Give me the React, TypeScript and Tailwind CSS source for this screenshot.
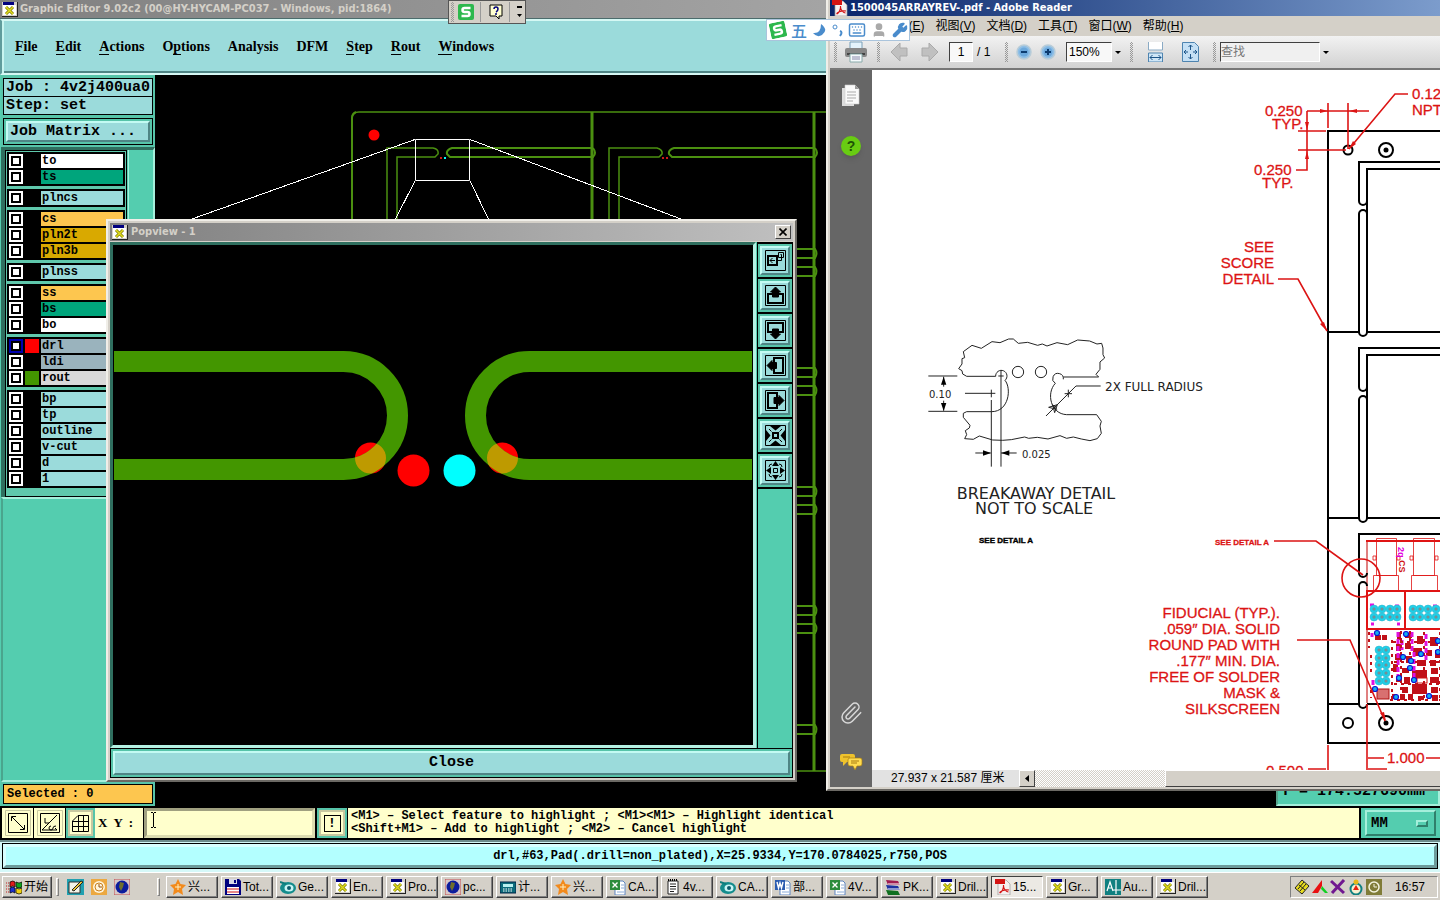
import React from "react";
import { Keyboard, User, Wrench, Paperclip } from "lucide-react";

const mono = "font-['Liberation_Mono',monospace] font-bold";
const ui = "font-['Liberation_Sans','Noto_Sans_CJK_SC',sans-serif]";
const caption = "font-['DejaVu_Sans_Condensed','DejaVu_Sans',sans-serif] font-bold font-stretch-condensed text-[11px]";
const motif =
  "border-2 border-t-[#c3fbf3] border-l-[#c3fbf3] border-b-[#4f8585] border-r-[#4f8585] bg-[#9bdbdb]";
const winRaised =
  "border border-t-white border-l-white border-b-[#404040] border-r-[#404040] bg-[#d4d0c8]";
const winSunken =
  "border border-t-[#404040] border-l-[#404040] border-b-white border-r-white";

/* ---------- shared icons ---------- */

const EditorIcon = () => (
  <svg className="h-[15px] w-4 shrink-0" viewBox="0 0 16 15">
    <rect width="16" height="15" fill="#222" />
    <rect width="15" height="14" fill="#d4d0c8" />
    <rect x="1" y="3" width="13" height="10" fill="#fff" />
    <rect x="1" width="11" height="3" fill="#00007f" />
    <path d="M4 5l7 7M11 5l-7 7" stroke="#807c00" strokeWidth="3" />
    <path d="M4 5l7 7M11 5l-7 7" stroke="#e0dc20" strokeWidth="1.5" />
  </svg>
);

const PdfIcon = () => (
  <svg className="size-4 shrink-0" viewBox="0 0 16 16">
    <path d="M3 1h8l4 4v11H3z" fill="#f5f0f0" stroke="#999" strokeWidth=".7" />
    <path d="M0 0h10v5H0z" fill="#d41414" />
    <path d="M5 14c2-1 4-5 3.500-8M5 14c-1-1 4-4 9-3M8.500 7c0 3 3 6 5 6" fill="none" stroke="#d41414" strokeWidth="1.200" />
  </svg>
);

const SogouIcon = ({ className = "size-4" }: { className?: string }) => (
  <svg className={`shrink-0 ${className}`} viewBox="0 0 16 16">
    <rect width="16" height="16" rx="2" fill="#2db84d" />
    <path d="M12.500 4H6.500a2 2 0 0 0 0 4h3a2 2 0 0 1 0 4H3.500" fill="none" stroke="#fff" strokeWidth="2.500" />
  </svg>
);

/* ---------- graphic editor ---------- */

const menus = [
  { label: "File", key: 0 },
  { label: "Edit", key: 0 },
  { label: "Actions", key: 0 },
  { label: "Options", key: 1 },
  { label: "Analysis", key: -1 },
  { label: "DFM", key: -1 },
  { label: "Step", key: 0 },
  { label: "Rout", key: 0 },
  { label: "Windows", key: 0 },
];

interface Layer {
  name: string;
  color: string;
  swatch?: string;
  active?: boolean;
}

const layerGroups: Layer[][] = [
  [
    { name: "to", color: "bg-white" },
    { name: "ts", color: "bg-[#00a57c]" },
  ],
  [{ name: "plncs", color: "bg-[#9bdbdb]" }],
  [
    { name: "cs", color: "bg-[#fdc64f]" },
    { name: "pln2t", color: "bg-[#d9a900]" },
    { name: "pln3b", color: "bg-[#d9a900]" },
  ],
  [{ name: "plnss", color: "bg-[#9bdbdb]" }],
  [
    { name: "ss", color: "bg-[#fdc64f]" },
    { name: "bs", color: "bg-[#00a57c]" },
    { name: "bo", color: "bg-white" },
  ],
  [
    { name: "drl", color: "bg-[#9ab3bd]", swatch: "bg-[#ff0000]", active: true },
    { name: "ldi", color: "bg-[#9ab3bd]" },
    { name: "rout", color: "bg-[#d9d9d9]", swatch: "bg-[#439600]" },
  ],
  [
    { name: "bp", color: "bg-[#9bdbdb]" },
    { name: "tp", color: "bg-[#9bdbdb]" },
    { name: "outline", color: "bg-[#9bdbdb]" },
    { name: "v-cut", color: "bg-[#9bdbdb]" },
    { name: "d", color: "bg-[#9bdbdb]" },
    { name: "1", color: "bg-[#9bdbdb]" },
  ],
];

function MenuBar() {
  return (
    <nav className="flex h-14 items-center gap-[18px] border-y-2 border-l-2 border-t-[#d5f8f4] border-l-[#5f9c9c] border-b-[#d5f8f4] bg-[#9bdbdb] pl-[13px] font-['Liberation_Serif',serif] text-[14px] font-bold shadow-[inset_2px_0_#c8f5f0,inset_0_-2px_#4f8585]">
      {menus.map(({ label, key }) => (
        <button key={label} className="leading-5 whitespace-pre">
          {key < 0 ? (
            label
          ) : (
            <>
              {label.slice(0, key)}
              <span className="border-b border-black">{label[key]}</span>
              {label.slice(key + 1)}
            </>
          )}
        </button>
      ))}
    </nav>
  );
}

function LayerList() {
  return (
    <div className="w-[122px] border border-black bg-[#5fc8ac] px-px pt-px pb-2">
      <div className="flex flex-col gap-[3px]">
        {layerGroups.map((group) => (
          <div key={group[0].name} className="bg-black p-px">
            {group.map((layer) => (
              <label key={layer.name} className="flex h-4 items-center gap-0.5 px-px">
                <input
                  type="checkbox"
                  className={`size-[14px] shrink-0 appearance-none border-2 bg-white shadow-[inset_0_0_0_2px_black] ${
                    layer.active ? "border-[#0000b0]" : "border-white"
                  }`}
                />
                <span className={`size-[14px] shrink-0 ${layer.swatch ?? "bg-black"}`} />
                <span className={`${mono} h-[14px] flex-1 pl-px text-[12px] leading-[14px] ${layer.color}`}>
                  {layer.name}
                </span>
              </label>
            ))}
          </div>
        ))}
      </div>
    </div>
  );
}

function SidePanel() {
  return (
    <aside className="flex w-[155px] shrink-0 flex-col bg-[#54cdaf] pl-px">
      <div className="border-2 border-[#57c4a9] bg-[#57c4a9] pt-px text-[15px]">
        <div className={`${mono} h-[19px] border border-black bg-[#9bdbdb] pl-0.5 leading-[18px] whitespace-pre`}>
          Job : 4v2j400ua0
        </div>
        <div className={`${mono} h-[18px] border border-t-0 border-black bg-[#9bdbdb] pl-0.5 leading-[18px] whitespace-pre`}>
          Step: set
        </div>
        <div className="mt-[3px] border border-black bg-[#57c4a9] p-0.5">
          <button className={`${mono} ${motif} block h-[21px] w-full pl-0.5 text-left leading-[17px]`}>
            Job Matrix ...
          </button>
        </div>
      </div>
      <div className="flex border-t-[3px] border-r-2 border-l-4 border-t-[#2f6f5f] border-r-[#a5efdb] border-l-[#2f6f5f]">
        <LayerList />
        <div className="ml-px flex-1 border-l border-[#a5efdb]" />
      </div>
      <div className="flex-1 border-2 border-r-[#a5efdb] border-t-[#a5efdb] border-b-[#a5efdb] border-l-[#4aa58d]" />
      <div className="border-2 border-[#57c4a9]">
        <div className={`${mono} h-5 border border-black bg-[#fdc64f] pl-[3px] text-[12px] leading-[18px]`}>
          Selected : 0
        </div>
      </div>
    </aside>
  );
}

const slotRows = [249, 267, 368, 386, 487, 505, 606, 624, 725];

function PanelDrawing() {
  return (
    <svg width="1285" height="731" viewBox="155 75 1285 731" className="block shrink-0" fill="none">
      <g stroke="#4b9010" strokeWidth="2">
        <path d="M352 771V118q0-6 7-6H1440" strokeWidth="1.500" />
        <path d="M352 219V118q0-4 4-6" />
        <path d="M592 112V771M814 112V771" strokeWidth="3" />
        <path d="M387 771V148H433q6 1 5 6l-3 3H397V771" strokeWidth="1.500" />
        <path d="M593 148H452q-6 2-5 6l3 3H593q4-4 0-9" />
        <path d="M609 771V148H657q6 2 5 6l-3 3H619V771" strokeWidth="1.500" />
        <path d="M815 148H674q-6 2-5 6l3 3H815q4-4 0-9" />
        <path d="M355 771H1440" strokeWidth="1.500" />
        {slotRows.map((y) => (
          <path key={y} d={`M790 ${y}H815q3 4 0 9H790`} />
        ))}
      </g>
      <g stroke="#fff">
        <path d="M415.500 139.500H469.500V180.500H415.500z" />
        <path d="M192 219L415 139.500M415 181L395 220M470 181L489 220M470 139.500L681 219" shapeRendering="crispEdges" />
      </g>
      <circle cx="374" cy="135" r="5.500" fill="#f00" />
      <path d="M440 157h2v2h-2zM662 157h2v2h-2zM666 157h2v2h-2z" fill="#d01818" />
      <path d="M444 157h2v2h-2z" fill="#0ff" />
    </svg>
  );
}

const toolButton = "flex items-center justify-center bg-[#ffffcc]";

function CommandRow() {
  return (
    <div className={`${mono} flex h-[34px] shrink-0 border-t-2 border-b-2 border-black bg-black text-[12px]`}>
      <button aria-label="Zoom window" className={`${toolButton} ml-0.5 w-[31px]`}>
        <svg width="26" height="26" viewBox="0 0 26 26" fill="none" stroke="#000">
          <path d="M.5.5h25v25h-25z" stroke="#c8c8a0" />
          <path d="M3.500 3.500h19v19h-19zM7 7l12 12M6.500 11V6.500H11M15 19.500h4.500V15" />
        </svg>
      </button>
      <button aria-label="Snap angle" className={`${toolButton} ml-px w-[31px]`}>
        <svg width="26" height="26" viewBox="0 0 26 26" fill="none" stroke="#000">
          <path d="M.5.5h25v25h-25z" stroke="#c8c8a0" />
          <path d="M3.500 3.500h19v19h-19zM5 20L20 5M5 20h15M8 8v5h4M14 16a2 2 0 1 0 2 2q0-2 3-2M18 18l2 2" />
        </svg>
      </button>
      <button aria-label="Grid" className={`${toolButton} ml-px w-[29px] border-2 border-[#57c4a9] shadow-[inset_0_0_0_2px_#c8c8a0]`}>
        <svg width="17" height="17" viewBox="0 0 17 17" fill="none" stroke="#000">
          <path d="M.5 6L6 .5h10.500v16H.5zM1 6.500h15M1 11.500h15M6.500 1v15M11.500 1v15" />
        </svg>
      </button>
      <label htmlFor="xy" className="flex w-12 items-center bg-[#ffffcc] pl-[3px] font-['Liberation_Serif',serif] text-[13px] whitespace-pre">
        X  Y  :
      </label>
      <div className="relative ml-px w-[171px]">
        <input
          id="xy"
          className="h-full w-full border-[3px] border-t-[#a0a080] border-l-[#a0a080] border-r-[#dcdcb0] border-b-[#dcdcb0] bg-[#ffffcc] px-1 outline-none"
        />
        <svg className="pointer-events-none absolute top-1 left-1.5" width="7" height="16" viewBox="0 0 7 16" fill="none" stroke="#000">
          <path d="M1 .5h2M4 .5h2M3.500 1v14M1 15.500h2M4 15.500h2" />
        </svg>
      </div>
      <button aria-label="Alert" className={`${toolButton} ml-0.5 w-[30px] border-2 border-[#57c4a9] shadow-[inset_0_0_0_2px_#c8c8a0]`}>
        <span className="size-[17px] border border-black text-[13px] leading-[15px]">!</span>
      </button>
      <div className="ml-px flex-1 bg-[#ffffcc] pt-0.5 pl-[3px] leading-[13px]">
        <p>&lt;M1&gt; – Select feature to highlight ; &lt;M1&gt;&lt;M1&gt; – Highlight identical</p>
        <p>&lt;Shift+M1&gt; – Add to highlight ; &lt;M2&gt; – Cancel highlight</p>
      </div>
      <div className="relative ml-0.5 w-[79px] bg-[#54cdaf] py-0.5 pr-1 pl-1">
        <select
          aria-label="Units"
          className="h-full w-full appearance-none border-2 border-t-[#a5efdb] border-l-[#a5efdb] border-r-[#2f7f6b] border-b-[#2f7f6b] pl-1 text-[14px]"
        >
          <option>MM</option>
          <option>INCH</option>
        </select>
        <span className="pointer-events-none absolute top-3 right-3 h-[7px] w-3 border-2 border-t-[#a5efdb] border-l-[#a5efdb] border-r-[#2f7f6b] border-b-[#2f7f6b]" />
      </div>
    </div>
  );
}

function StatusRow() {
  return (
    <div className="h-8 shrink-0 border-t-2 border-[#6d8c8c] bg-[#d5f8f8] px-0.5 pt-px pb-[3px]">
      <div className="h-full border border-black">
        <div className={`${mono} flex h-full items-center justify-center border-3 border-t-[#d8ffff] border-l-[#d8ffff] border-r-[#6d9c9c] border-b-[#6d9c9c] bg-[#b3ffff] text-[12px]`}>
          drl,#63,Pad(.drill=non_plated),X=25.9334,Y=170.0784025,r750,POS
        </div>
      </div>
    </div>
  );
}

/* ---------- popview ---------- */

const leftRout = "M114 361.500H343.500a54 54 0 0 1 0 108H114";
const rightRout = "M752 361.500H529.500a54 54 0 0 0 0 108H752";

const popTools: { name: string; art: React.ReactNode }[] = [
  {
    name: "Swap view",
    art: (
      <>
        <path d="M3 6h9v9H3z" fill="none" strokeWidth="2" />
        <path d="M13.500 2.500h5v5h-5zM15.500 4.500h1v6H12M5 10.500h5M7.500 8l-2.500 2.500L7.500 13" fill="none" />
      </>
    ),
  },
  { name: "Pan up", art: <><path d="M7 9H3v9h15V9h-4" fill="none" strokeWidth="2" /><path d="M10.500 2l5 5h-2v5h-6V7h-2z" /></> },
  { name: "Pan down", art: <><path d="M7 12H3V3h15v9h-4" fill="none" strokeWidth="2" /><path d="M10.500 19l5-5h-2V9h-6v5h-2z" /></> },
  { name: "Pan left", art: <><path d="M9 7V3h9v15H9v-4" fill="none" strokeWidth="2" /><path d="M2 10.500l5-5v2h4.500v6H7v2z" /></> },
  { name: "Pan right", art: <><path d="M12 7V3H3v15h9v-4" fill="none" strokeWidth="2" /><path d="M19 10.500l-5-5v2H9v6h5v2z" /></> },
  {
    name: "Zoom in",
    art: (
      <>
        <path d="M8 8h5v5H8z" fill="none" strokeWidth="2" />
        <path d="M5 1h11l-5.500 4.500zM5 20h11l-5.500-4.500zM1 5v11l4.500-5.500zM20 5v11l-4.500-5.500z" stroke="none" />
        <path d="M4 4l2.500 2.500M17 4l-2.500 2.500M4 17l2.500-2.500M17 17l-2.500-2.500" />
      </>
    ),
  },
  {
    name: "Zoom out",
    art: (
      <>
        <path d="M8.500 8.500h4v4h-4zM7 4Q4 4 4 7M14 4q3 0 3 3M7 17q-3 0-3-3M14 17q3 0 3-3" fill="none" />
        <path d="M7 6h7l-3.500-5zM7 15h7l-3.500 5zM6 7v7l-5-3.500zM15 7v7l5-3.500z" stroke="none" />
      </>
    ),
  },
];

function Popview() {
  return (
    <section
      aria-label="Popview"
      className="absolute top-[219px] left-[106px] flex h-[563px] w-[691px] flex-col border-2 border-t-[#f0eee8] border-l-[#f0eee8] border-r-[#6b6964] border-b-[#6b6964] bg-[#d4d0c8] p-0.5"
    >
      <header className="mb-px flex h-[18px] shrink-0 items-center gap-[3px] bg-linear-to-r from-[#808080] to-[#c0c0c0] px-0.5">
        <EditorIcon />
        <h2 className={`${caption} leading-4 text-[#d4d0c8]`}>Popview - 1</h2>
        <button aria-label="Close popview" className={`${winRaised} ml-auto flex h-[14px] w-4 items-center justify-center`}>
          <svg width="8" height="8" viewBox="0 0 8 8" stroke="#000" strokeWidth="1.600">
            <path d="M.5.5l7 7M7.500.5l-7 7" />
          </svg>
        </button>
      </header>
      <div className="flex min-h-0 flex-1 bg-[#54cdaf]">
        <div className="mr-px flex-1 border-[3px] border-t-[#2f6f5f] border-l-[#2f6f5f] border-r-[#b5f2e4] border-b-[#b5f2e4] bg-black">
          <svg viewBox="113 245 640 502" className="h-full w-full" preserveAspectRatio="xMinYMin slice" fill="none">
            <clipPath id="pads">
              <circle cx="370.500" cy="458" r="15.500" />
              <circle cx="502.500" cy="458" r="15.500" />
            </clipPath>
            <circle cx="370.500" cy="458" r="15.500" fill="#f00" />
            <circle cx="502.500" cy="458" r="15.500" fill="#f00" />
            <path d={`${leftRout}${rightRout}`} stroke="#439600" strokeWidth="21" />
            <path d={`${leftRout}${rightRout}`} stroke="#be9a00" strokeWidth="21" clipPath="url(#pads)" />
            <circle cx="413.500" cy="470.500" r="16" fill="#f00" />
            <circle cx="459.500" cy="470.500" r="16" fill="#0ff" />
          </svg>
        </div>
        <div className="w-9 border-x border-t-2 border-black">
          {popTools.map((tool) => (
            <button
              key={tool.name}
              aria-label={tool.name}
              className="flex h-[35px] w-full items-center justify-center border-b-2 border-black bg-[#57c4a9] p-0.5"
            >
              <span className={`${motif} flex h-full w-full items-center justify-center`}>
                <svg width="21" height="21" viewBox="0 0 21 21" stroke="#000" fill="#000">
                  <path d="M.5.5h20v20H.5z" fill="none" />
                  {tool.art}
                </svg>
              </span>
            </button>
          ))}
        </div>
      </div>
      <div className="shrink-0 border border-black bg-[#57c4a9] p-0.5">
        <button className={`${mono} ${motif} block h-6 w-full text-[15px] leading-5`}>Close</button>
      </div>
    </section>
  );
}

/* ---------- pdf reader ---------- */

const readerMenus = [
  ["文件", "F"],
  ["编辑", "E"],
  ["视图", "V"],
  ["文档", "D"],
  ["工具", "T"],
  ["窗口", "W"],
  ["帮助", "H"],
];

const Grip = () => <span className="h-5 w-[3px] shrink-0 bg-[repeating-conic-gradient(#999_0_25%,transparent_0_50%)] bg-[length:2px_2px]" />;

const Caret = ({ label }: { label: string }) => (
  <button aria-label={label} className="flex h-5 w-3 shrink-0 items-center justify-center">
    <svg width="6" height="3" viewBox="0 0 6 3"><path d="M0 0h6L3 3z" /></svg>
  </button>
);

function ReaderToolbar() {
  return (
    <div className="flex h-[34px] shrink-0 items-center border-b-2 border-[#777] bg-linear-to-b from-[#f2f2f2] to-[#d2d2d2] pl-1">
      <Grip />
      <button aria-label="打印" className="ml-2">
        <svg width="22" height="22" viewBox="0 0 22 22">
          <path d="M5 1h12v7H5z" fill="#e4f3fb" stroke="#7aa0b8" />
          <rect y="7" width="22" height="9" rx="2" fill="#888" />
          <rect x="2" y="12" width="18" height="2" fill="#444" />
          <path d="M5 13h12v8H5z" fill="#f5fafc" stroke="#8aa" />
          <path d="M7 16h8M7 18h8" stroke="#88a" />
        </svg>
      </button>
      <span className="ml-[10px] flex"><Grip /></span>
      <button aria-label="上一页" className="ml-[10px]">
        <svg width="18" height="20" viewBox="0 0 18 20"><path d="M1 10l9-9v5h7v8h-7v5z" fill="#c0c0c0" stroke="#aaa" /></svg>
      </button>
      <button aria-label="下一页" className="ml-[13px]">
        <svg width="18" height="20" viewBox="0 0 18 20"><path d="M17 10L8 1v5H1v8h7v5z" fill="#c0c0c0" stroke="#aaa" /></svg>
      </button>
      <input aria-label="页码" defaultValue="1" className={`${winSunken} ml-[10px] h-5 w-6 shrink-0 bg-[#f8f8f8] text-center`} />
      <span className="ml-1 w-7 whitespace-pre">/ 1</span>
      <Grip />
      {["缩小", "放大"].map((name, i) => (
        <button key={name} aria-label={name} className="ml-2">
          <svg width="16" height="16" viewBox="0 0 16 16">
            <circle cx="8" cy="8" r="7" fill="#8fbfe6" stroke="#b8ccd8" strokeWidth="1.500" />
            <circle cx="8" cy="8" r="4.500" fill="#6ba8dc" />
            <path d={i ? "M5 8h6M8 5v6" : "M5 8h6"} stroke="#0c3c70" strokeWidth="2" />
          </svg>
        </button>
      ))}
      <input aria-label="缩放" defaultValue="150%" className={`${winSunken} ml-[10px] h-5 w-[46px] shrink-0 bg-[#f8f8f8] pl-0.5`} />
      <Caret label="缩放比例" />
      <span className="ml-1.5 flex"><Grip /></span>
      <button aria-label="适合宽度" className="ml-[14px]">
        <svg width="17" height="20" viewBox="0 0 17 20">
          <path d="M1.500 0v8h14V0" fill="#fff" stroke="#8aaac4" />
          <path d="M1.500 20v-9h14v9z" fill="#cfe6f7" stroke="#4e84b0" />
          <path d="M3 15.500h11M5.500 13L3 15.500 5.500 18M11.500 13l2.500 2.500-2.500 2.500" fill="none" stroke="#1c5488" />
        </svg>
      </button>
      <button aria-label="适合页面" className="ml-[18px]">
        <svg width="17" height="20" viewBox="0 0 17 20" fill="none">
          <path d="M.5.5h12l4 4v15H.5z" fill="#c5e0f5" stroke="#4e84b0" />
          <path d="M8.500 3v5M6.500 5l2-2 2 2M8.500 17v-5M6.500 15l2 2 2-2M2 10h4M4 8l-2 2 2 2M15 10h-4M13 8l2 2-2 2" stroke="#1c5488" />
        </svg>
      </button>
      <span className="ml-[14px] flex"><Grip /></span>
      <input aria-label="查找" placeholder="查找" className={`${winSunken} ml-1 h-5 w-[100px] shrink-0 bg-[#f0f0f0] placeholder:text-[#777]`} />
      <Caret label="查找选项" />
    </div>
  );
}

const headerPads = [1374, 1382, 1390, 1397, 1413, 1420, 1428, 1436];
const chips = [
  [1375, 635, 6, 5], [1382, 635, 5, 5], [1397, 632, 4, 8], [1405, 633, 7, 5], [1417, 636, 6, 8], [1430, 637, 8, 9],
  [1396, 644, 5, 7], [1405, 643, 6, 6], [1413, 648, 9, 8], [1426, 650, 6, 6], [1435, 650, 5, 8], [1395, 654, 8, 6],
  [1406, 656, 6, 7], [1417, 660, 9, 6], [1430, 660, 6, 6], [1393, 664, 5, 8], [1402, 668, 7, 5], [1412, 670, 15, 9],
  [1431, 668, 7, 6], [1396, 676, 6, 6], [1404, 677, 6, 7], [1430, 677, 9, 6], [1402, 687, 6, 6], [1412, 684, 15, 10],
  [1431, 687, 7, 6], [1392, 694, 5, 5], [1400, 694, 5, 6], [1408, 694, 5, 6], [1418, 696, 6, 4], [1432, 695, 6, 6],
];
const vias = [
  [1377, 633], [1406, 634], [1438, 641], [1403, 657], [1421, 654], [1411, 661],
  [1399, 678], [1414, 680], [1396, 697], [1429, 696], [1410, 668], [1438, 652],
];

const notes = [
  "FIDUCIAL  (TYP.).",
  ".059″ DIA. SOLID",
  "ROUND PAD WITH",
  ".177″  MIN.  DIA.",
  "FREE OF SOLDER",
  "MASK  &",
  "SILKSCREEN",
];

function PdfDrawing() {
  return (
    <svg
      width="568"
      height="700"
      viewBox="872 70 568 700"
      className="block font-['Liberation_Sans',Arial,sans-serif] whitespace-pre"
      fill="none"
      fontSize="15"
    >
      {/* breakaway detail */}
      <g transform="translate(900 320) scale(.3333)" stroke="#222" strokeWidth="3">
        <path d="M287 169H200l-12-7-2-10-10-6 10-14 0-16 8-3-4-18 26-19 28 9 32-20 24 3 26-11 14 0 15 13 28-3 30 9 14-4 14 6 30-10 32 6 30-14 36 3 22 9 14-2 4 14 0 20 5 10-14 12 0 22-12 15 8 8H490" />
        <path d="M287 169a17 17 0 1 1 28 12c20 24 12 94-40 94H200l-10 5 0 12 20 24-2 8-12 8 4 12-6 12 26 2 18-10 40 12 30 1 26-2 40-8 12 4 26-3 32 5 36-10 20 8 20-4 24 6 26 5 22-6 12-16-4-22 4-14-14-20H500c-48-2-62-64-34-94a16 16 0 1 1 24-12" />
        <circle cx="354" cy="156" r="17" />
        <circle cx="423" cy="156" r="17" />
        <path d="M85 168H172M85 274H172M131 170V200M131 242V272M195 220H286M274 209V232M274 240V440M303 150V440M295 168H311M226 399H272M303 399H350M602 198H528L438 288M494 221H516M505 209V232" />
        <path d="M446 262l26-8-8 24-6-24 12 14z" />
        <path d="M131 170l-8 24h16zM131 273l-8-24h16zM273 399l-24-8v16zM304 399l24-8v16z" fill="#000" stroke="none" />
      </g>
      <g fill="#222" className="font-['DejaVu_Sans',sans-serif]">
        <text x="929" y="398" fontSize="10">0.10</text>
        <text x="1022" y="458" fontSize="10">0.025</text>
        <text x="1105" y="391" fontSize="12">2X  FULL  RADIUS</text>
        <g fontSize="16" textAnchor="middle">
          <text x="1036" y="499">BREAKAWAY  DETAIL</text>
          <text x="1034" y="514">NOT  TO  SCALE</text>
        </g>
      </g>
      <text x="979" y="543" fontSize="8" fontWeight="bold" fill="#000" stroke="#000" strokeWidth=".4">SEE DETAIL A</text>

      {/* populated board */}
      <g stroke="#e01414">
        <path d="M1367 541V703" stroke="#e08080" strokeWidth="2" />
        <path d="M1366 541H1440M1366 591H1440M1366 629H1440M1367 591V629M1405 591V629" strokeWidth="2" />
        <path d="M1376.500 538.500h20v37h-20zM1373.500 575.500h25v15h-25zM1413.500 538.500h21v37h-21zM1411.500 575.500h26v15h-26zM1373 556h3v4h-3zM1397 556h3v4h-3zM1410 556h3v4h-3zM1435 556h3v4h-3z" strokeWidth=".8" />
      </g>
      <g fontSize="9" fontWeight="bold">
        <text transform="translate(1398 547) rotate(90)" fill="#e000e0">2q</text>
        <text transform="translate(1399 560) rotate(90)" fill="#d01414">CS</text>
      </g>
      <g fill="#c01018">
        {chips.map(([x, y, w, h]) => (
          <rect key={`${x}-${y}`} x={x} y={y} width={w} height={h} />
        ))}
        <rect x="1377" y="689" width="12" height="10" fill="#d87070" stroke="#b01010" />
        <rect x="1417" y="678" width="10" height="5" fill="#fff" stroke="#d01414" />
      </g>
      <path d="M1398 632v48M1412 632v20M1414 652v30M1426 634v26M1402 640v10M1372 633v4M1373 680v5M1370 605h4M1395 606h4M1371 624h3M1397 624h3M1433 606h4" stroke="#e010e0" strokeWidth="3" strokeDasharray="5 2" />
      <path d="M1369 632v16M1371 655v20M1392 640v60M1401 631v70M1424 632v68M1440 632v68M1371 690v8M1410 631v40M1390 700h50M1393 642h47M1394 662h46M1394 684h46" stroke="#c01018" strokeWidth="2" strokeDasharray="3 4" />
      <g fill="#20d0e8" stroke="#30b0c8" strokeWidth=".5">
        {headerPads.map((x) => (
          <React.Fragment key={x}>
            <circle cx={x} cy="609" r="4" />
            <circle cx={x} cy="617" r="4" />
            <circle cx={x} cy="609" r="1.500" fill="#888" />
            <circle cx={x} cy="617" r="1.500" fill="#888" />
          </React.Fragment>
        ))}
        {[650, 658, 665, 673, 681].map((y) => (
          <React.Fragment key={y}>
            <circle cx="1379" cy={y} r="4" />
            <circle cx="1386" cy={y} r="4" />
            <circle cx="1379" cy={y} r="1.500" fill="#888" />
            <circle cx="1386" cy={y} r="1.500" fill="#888" />
          </React.Fragment>
        ))}
      </g>
      <g fill="#10b0f0" stroke="#1010d0" strokeWidth="1.200">
        {vias.map(([x, y]) => (
          <circle key={`${x}-${y}`} cx={x} cy={y} r="2.500" />
        ))}
        <circle cx="1375" cy="689" r="2.500" />
      </g>

      {/* array outline */}
      <g stroke="#000" strokeWidth="2">
        <path d="M1440 131H1328V743H1440M1328 332H1359M1367 332H1440M1328 518H1359M1367 518H1440M1328 704H1359M1367 704H1440" />
        <path d="M1440 162H1359V201a4 4 0 0 0 8 0M1440 169H1367V332a4 4 0 0 1-8 0V214a4 4 0 0 1 8 0" />
        <path d="M1440 348H1359V387a4 4 0 0 0 8 0M1440 355H1367V518a4 4 0 0 1-8 0V400a4 4 0 0 1 8 0" />
        <path d="M1440 534H1359V573a4 4 0 0 0 8 0M1367 704a4 4 0 0 1-8 0V586a4 4 0 0 1 8 0" />
        <circle cx="1348" cy="150" r="4.500" />
        <circle cx="1386" cy="150" r="7" />
        <circle cx="1348" cy="723" r="5" />
        <circle cx="1386" cy="723" r="7" />
      </g>
      <circle cx="1386" cy="150" r="2.500" fill="#000" />
      <circle cx="1386" cy="723" r="2.500" fill="#000" />

      {/* dimensions and leaders */}
      <g stroke="#dc1414" strokeWidth="1.600">
        <path d="M1307 111H1328M1328 103V128M1348 103V149M1328 111H1369M1307 111V170H1296M1298 131H1326M1298 150H1346M1408 94H1395L1349 149" />
        <path d="M1278 279H1298L1327 331M1274 541H1316L1363 575M1297 640H1350L1385 721" />
        <circle cx="1361" cy="578" r="19" />
        <path d="M1367 704V770M1328 745V770M1368 758H1384M1426 758H1440M1308 769H1326M1368 769H1387" />
      </g>
      <path d="M1328 111l-8-2v4zM1349 111l8-2v4zM1307 130l-2-8h4zM1307 151l-2 8h4zM1349 149l7-5-3-3zM1327 331l-7-7 4-2zM1386 721l-6-8 4-1z" fill="#dc1414" />
      <g fill="#dc1414" stroke="#dc1414" strokeWidth=".3">
        <text x="1265" y="116">0.250</text>
        <text x="1272" y="129">TYP.</text>
        <text x="1254" y="175">0.250</text>
        <text x="1262" y="188">TYP.</text>
        <text x="1412" y="99">0.12</text>
        <text x="1412" y="115">NPT</text>
        <text x="1387" y="763">1.000</text>
        <text x="1266" y="776">0.500</text>
        <g textAnchor="end">
          <text x="1274" y="252">SEE</text>
          <text x="1274" y="268">SCORE</text>
          <text x="1274" y="284">DETAIL</text>
          {notes.map((line, i) => (
            <text key={line} x="1280" y={618 + i * 16}>
              {line}
            </text>
          ))}
        </g>
        <text x="1215" y="545" fontSize="8" fontWeight="bold">SEE DETAIL A</text>
      </g>
    </svg>
  );
}

function Reader() {
  return (
    <section
      aria-label="Adobe Reader"
      className={`${ui} absolute top-0 right-0 bottom-[109px] left-[826px] flex flex-col border-b-2 border-l-2 border-b-[#6b6964] border-l-[#f0eee8] bg-[#d4d0c8] pb-0.5 pl-0.5 text-[12px]`}
    >
      <header className="flex h-4 shrink-0 items-center gap-0.5 bg-linear-to-r from-[#0a246a] to-[#7c9ccc] pl-0.5">
        <PdfIcon />
        <h1 className={`${caption} leading-4 text-white`}>1500045ARRAYREV-.pdf - Adobe Reader</h1>
      </header>
      <nav className="flex h-5 shrink-0 items-center gap-[11px] pl-1">
        {readerMenus.map(([label, key]) => (
          <button key={key} className="leading-5 whitespace-nowrap">
            {label}(<span className="underline">{key}</span>)
          </button>
        ))}
      </nav>
      <ReaderToolbar />
      <div className="flex min-h-0 flex-1">
        <aside className="flex w-[42px] shrink-0 flex-col items-center bg-[#666] pt-[14px] pb-4">
          <button aria-label="页面">
            <svg width="20" height="24" viewBox="0 0 20 24">
              <path d="M1 4h12v18H1z" fill="#ddd" />
              <path d="M4 1h10l4 4v15H4z" fill="#fafafa" stroke="#ccc" strokeWidth=".6" />
              <path d="M14 1v4h4" fill="#999" />
              <path d="M6 8h9M6 11h9M6 14h9M6 17h6" stroke="#aaa" />
            </svg>
          </button>
          <button
            aria-label="帮助"
            className="mt-7 size-5 rounded-full bg-[#68cc12] text-[14px] leading-5 font-bold text-[#1e5206] shadow-md"
          >
            ?
          </button>
          <button aria-label="附件" className="mt-auto">
            <Paperclip className="size-6 text-[#d8d8d8]" strokeWidth={1.5} />
          </button>
          <button aria-label="注释" className="mt-7">
            <svg width="24" height="18" viewBox="0 0 24 18">
              <path d="M3 1h11q2 0 2 2v4q0 2-2 2H8l-4 4V9H3Q1 9 1 7V3q0-2 2-2z" fill="#eec22c" />
              <path d="M11 5h10q2 0 2 2v4q0 2-2 2h-3l-2 4-2-4h-3q-2 0-2-2V7q0-2 2-2z" fill="#ffdc50" stroke="#a87c10" strokeWidth=".7" />
              <path d="M12 8h8M12 10h6M4 4h7" stroke="#a87c10" />
            </svg>
          </button>
        </aside>
        <div className="flex min-w-0 flex-1 flex-col bg-white">
          <div className="min-h-0 flex-1 overflow-hidden">
            <PdfDrawing />
          </div>
          <div className="flex h-[17px] shrink-0">
            <span className="w-[147px] bg-[#e2e2e2] pl-[19px] leading-[17px] whitespace-nowrap">27.937 x 21.587 厘米</span>
            <button aria-label="向左滚动" className={`${winRaised} flex w-4 items-center justify-center`}>
              <svg width="4" height="7" viewBox="0 0 4 7"><path d="M4 0v7L0 3.500z" /></svg>
            </button>
            <div className="w-[130px] bg-[repeating-conic-gradient(#fff_0_25%,#d4d0c8_0_50%)] bg-[length:2px_2px]" />
            <div className="flex-1 border-t border-b border-l border-t-white border-b-[#404040] border-l-white bg-[#d4d0c8]" />
          </div>
        </div>
      </div>
    </section>
  );
}

/* ---------- input method bars ---------- */

function LanguageBar() {
  return (
    <div className="absolute top-0 left-[448px] flex h-6 w-[78px] items-center border border-[#555] bg-[#d4d0c8] pl-0.5">
      <Grip />
      <button aria-label="Input method" className="ml-1"><SogouIcon /></button>
      <span className="ml-1.5 h-5 w-px bg-[#999]" />
      <button aria-label="Help" className="ml-2">
        <svg width="14" height="16" viewBox="0 0 14 16">
          <path d="M1 1h12v11h-3v3l-3-3H1z" fill="#ffffd0" stroke="#000" />
          <path d="M5 5q0-2 2-2t2 2-2 3M7 9v2" fill="none" stroke="#00007f" strokeWidth="1.500" />
        </svg>
      </button>
      <span className="ml-1.5 h-5 w-px bg-[#999]" />
      <button aria-label="Options" className="ml-[7px]">
        <svg width="5" height="12" viewBox="0 0 5 12"><path d="M0 0h5v2H0zM0 8h5L2.500 11z" /></svg>
      </button>
    </div>
  );
}

function SogouBar() {
  return (
    <div className="absolute top-[19px] left-[766px] flex h-[22px] w-36 items-center gap-[5px] border border-[#aac4dc] bg-white pl-[3px] text-[#4a8ccc]">
      <SogouIcon className="size-4 -rotate-12" />
      <span className="w-4 font-['Noto_Sans_CJK_SC',sans-serif] text-[16px] leading-[18px] font-medium">五</span>
      <svg width="14" height="14" viewBox="0 0 14 14">
        <path d="M9 1q8 6 1 11-5 3-9-2 8 1 8-9z" fill="currentColor" />
      </svg>
      <svg width="12" height="14" viewBox="0 0 12 14">
        <circle cx="4" cy="4" r="2" fill="none" stroke="currentColor" />
        <path d="M9 8q3 1 0 5" fill="none" stroke="currentColor" strokeWidth="2" />
      </svg>
      <Keyboard className="size-[18px]" />
      <User className="size-4 fill-current text-[#aaa]" />
      <Wrench className="size-4 fill-current" />
    </div>
  );
}

/* ---------- taskbar ---------- */

const StarIcon = () => (
  <svg className="size-4 shrink-0" viewBox="0 0 16 16">
    <path d="M8 0l2.500 5 5.500 1-4 4 1 6-5-3-5 3 1-6-4-4 5.500-1z" fill="#f28a1c" />
    <path d="M8 5v6M5 8h6" stroke="#fff0c0" />
  </svg>
);

const DiskIcon = () => (
  <svg className="size-4 shrink-0" viewBox="0 0 16 16">
    <path d="M0 0h14l2 2v14H0z" fill="#00007f" />
    <path d="M4 0h8v5H4z" fill="#d8d8e8" />
    <path d="M2 8h12v7H2z" fill="#fff" />
    <path d="M2 10h12M2 13h12" stroke="#d01010" />
    <path d="M9 1h2v3H9z" fill="#00007f" />
  </svg>
);

const EyeIcon = () => (
  <svg className="size-4 shrink-0" viewBox="0 0 16 16">
    <ellipse cx="8" cy="9" rx="8" ry="6" fill="#148c8c" />
    <ellipse cx="9" cy="9" rx="4.500" ry="3.500" fill="#c8f4f4" />
    <circle cx="9" cy="9" r="2" fill="#0c5c6c" />
    <path d="M0 3l6 2" stroke="#0c7c7c" strokeWidth="2" />
  </svg>
);

const GlobeIcon = () => (
  <svg className="size-4 shrink-0" viewBox="0 0 16 16">
    <rect width="16" height="16" fill="#d8c8c8" stroke="#c05050" />
    <circle cx="8" cy="8" r="6.500" fill="#0c1c9c" />
    <path d="M6 3l4 1-1 4-2 4-2-4z" fill="#70702c" />
  </svg>
);

const CalcIcon = () => (
  <svg className="size-4 shrink-0" viewBox="0 0 16 16">
    <path d="M0 3h16v11H0z" fill="#0c6c7c" stroke="#024" />
    <path d="M3 5h10v3H3z" fill="#b8f0f0" />
    <path d="M3 10h10M3 12h10" stroke="#fff" strokeDasharray="1.500 1" />
  </svg>
);

const OfficeIcon = ({ color, letter }: { color: string; letter: string }) => (
  <svg className="size-4 shrink-0" viewBox="0 0 16 16">
    <path d="M5 2h8l2 2v12H5z" fill="#fff" stroke="#5c84c0" />
    <path d="M11 6h3M11 9h3M7 13h7" stroke="#8cacd8" />
    <rect y="1" width="10" height="10" fill={color} />
    <path d={letter === "X" ? "M2.500 3.500l5 5M7.500 3.500l-5 5" : "M2 3l1.500 6L5 4l1.500 5L8 3"} fill="none" stroke="#fff" strokeWidth="1.400" />
  </svg>
);

const NotepadIcon = () => (
  <svg className="size-4 shrink-0" viewBox="0 0 16 16">
    <path d="M3 2h10v13H3z" fill="#fff" stroke="#222" />
    <path d="M3 1h10" stroke="#000" strokeDasharray="1 1" strokeWidth="2" />
    <path d="M5 5h6M5 7.500h6M5 10h6M5 12.500h4" stroke="#222" />
  </svg>
);

const RarIcon = () => (
  <svg className="size-4 shrink-0" viewBox="0 0 16 16">
    <path d="M1 1l12 1 2 4H3z" fill="#a01c50" />
    <path d="M1 6l12 1 2 4H3z" fill="#1c30a0" />
    <path d="M1 11l12 1 2 4H3z" fill="#107020" />
    <path d="M3 5h12M3 10h12" stroke="#fff" />
  </svg>
);

const CadIcon = () => (
  <svg className="size-4 shrink-0" viewBox="0 0 16 16">
    <rect width="16" height="16" fill="#108080" />
    <path d="M2 12L5 3l3 9M3 9h4M11 1v14M8 11h8" fill="none" stroke="#fff" strokeWidth="1.200" />
  </svg>
);

const tasks: { label: string; icon: React.ReactNode; active?: boolean }[] = [
  { label: "兴...", icon: <StarIcon /> },
  { label: "Tot...", icon: <DiskIcon /> },
  { label: "Ge...", icon: <EyeIcon /> },
  { label: "En...", icon: <EditorIcon /> },
  { label: "Pro...", icon: <EditorIcon /> },
  { label: "pc...", icon: <GlobeIcon /> },
  { label: "计...", icon: <CalcIcon /> },
  { label: "兴...", icon: <StarIcon /> },
  { label: "CA...", icon: <OfficeIcon color="#2c8c3c" letter="X" /> },
  { label: "4v...", icon: <NotepadIcon /> },
  { label: "CA...", icon: <EyeIcon /> },
  { label: "部...", icon: <OfficeIcon color="#2c5cb0" letter="W" /> },
  { label: "4V...", icon: <OfficeIcon color="#2c8c3c" letter="X" /> },
  { label: "PK...", icon: <RarIcon /> },
  { label: "Dril...", icon: <EditorIcon /> },
  { label: "15...", icon: <PdfIcon />, active: true },
  { label: "Gr...", icon: <EditorIcon /> },
  { label: "Au...", icon: <CadIcon /> },
  { label: "Dril...", icon: <EditorIcon /> },
];

const Divider = () => <span className="h-[18px] w-[3px] shrink-0 border border-t-white border-l-white border-r-[#808080] border-b-[#808080]" />;

function Taskbar() {
  return (
    <footer className={`${ui} flex h-7 shrink-0 items-center border-t border-white bg-[#d4d0c8] px-0.5 text-[12px]`}>
      <button className={`${winRaised} flex h-[22px] w-[50px] items-center gap-0.5 pl-[3px] shadow-[inset_-1px_-1px_#808080]`}>
        <svg className="size-4 shrink-0" viewBox="0 0 16 16">
          <path d="M4 3q3-2 5 0v5q-2-2-5 0z" fill="#e01c1c" stroke="#000" strokeWidth=".7" />
          <path d="M10 3q3 2 6 0v5q-3 2-6 0z" fill="#10a020" stroke="#000" strokeWidth=".7" />
          <path d="M4 9q3-2 5 0v5q-2-2-5 0z" fill="#1c30d0" stroke="#000" strokeWidth=".7" />
          <path d="M10 9q3 2 6 0v5q-3 2-6 0z" fill="#f0d010" stroke="#000" strokeWidth=".7" />
          <path d="M0 4h3M0 7h3M0 10h3M0 13h3" stroke="#c02020" strokeDasharray="1 1" />
        </svg>
        <span className="whitespace-nowrap">开始</span>
      </button>
      <span className="ml-1 flex"><Divider /></span>
      <div className="ml-2 flex w-[90px] items-center gap-[7px]">
        <button aria-label="Show desktop">
          <svg width="17" height="16" viewBox="0 0 17 16">
            <rect width="17" height="16" fill="#20a0b0" />
            <path d="M2 3h11v11H2z" fill="#f4f4e8" stroke="#333" />
            <path d="M5 11l9-9 2 1-9 9z" fill="#f0c83c" stroke="#222" />
          </svg>
        </button>
        <button aria-label="Clock">
          <svg width="16" height="16" viewBox="0 0 16 16" fill="none">
            <rect width="16" height="16" fill="#eca840" />
            <circle cx="8" cy="8" r="6" fill="#fff4dc" />
            <circle cx="8" cy="8" r="4" stroke="#c88020" />
            <path d="M8 5v3h3" stroke="#905010" />
          </svg>
        </button>
        <button aria-label="Browser"><GlobeIcon /></button>
      </div>
      <Divider />
      <div className="ml-1.5 flex flex-1 gap-[3px]">
        {tasks.map((task, i) => (
          <button
            key={i}
            className={`flex h-[22px] w-[52px] items-center gap-0.5 overflow-hidden pl-[3px] whitespace-nowrap ${
              task.active
                ? `${winSunken} bg-[#ece9e4]`
                : `${winRaised} shadow-[inset_-1px_-1px_#808080]`
            }`}
          >
            {task.icon}
            {task.label}
          </button>
        ))}
      </div>
      <div className="flex h-[22px] w-[148px] shrink-0 items-center gap-0.5 border border-t-[#808080] border-l-[#808080] border-r-white border-b-white pl-[3px]">
        <svg width="16" height="16" viewBox="0 0 16 16">
          <path d="M1 9l7-8 7 6-7 8z" fill="#e8dc20" stroke="#222" />
          <path d="M4 10l6-7M6 12l6-7M5 6l6 5" stroke="#222" />
        </svg>
        <svg width="16" height="16" viewBox="0 0 16 16">
          <path d="M0 14L10 1v6l-4 7z" fill="#e81010" />
          <path d="M10 7l6 7h-3l-4-4z" fill="#10d020" />
        </svg>
        <svg width="16" height="16" viewBox="0 0 16 16">
          <path d="M1 2l13 12M14 1L2 14" stroke="#701890" strokeWidth="3" />
        </svg>
        <svg width="16" height="16" viewBox="0 0 16 16">
          <circle cx="8" cy="10" r="5.500" fill="#f8f0d0" stroke="#108080" strokeWidth="2" />
          <circle cx="8" cy="3" r="2.500" fill="#e8b818" />
          <path d="M5 11l3-5 3 5z" fill="#e82010" />
        </svg>
        <svg width="16" height="16" viewBox="0 0 16 16" fill="none">
          <rect width="16" height="16" fill="#807c38" />
          <circle cx="8" cy="8" r="5" stroke="#f4f4e0" strokeWidth="1.500" />
          <path d="M8 5v3h3" stroke="#f4f4e0" />
        </svg>
        <time className="ml-auto pr-3">16:57</time>
      </div>
    </footer>
  );
}

export default function App() {
  return (
    <div className="relative flex h-screen flex-col overflow-hidden bg-black text-black">
      <header className="flex h-[19px] shrink-0 items-center gap-0.5 border-b border-[#4c6c6c] bg-linear-to-r from-[#808080] to-[#c0c0c0] pl-0.5">
        <EditorIcon />
        <h1 className={`${caption} leading-4 text-[#d4d0c8]`}>
          Graphic Editor 9.02c2 (00@HY-HYCAM-PC037 - Windows, pid:1864)
        </h1>
      </header>
      <MenuBar />
      <main className="flex min-h-0 flex-1">
        <SidePanel />
        <div className="relative min-w-0 flex-1 overflow-hidden">
          <PanelDrawing />
          <div className={`${mono} absolute right-0 bottom-0 flex h-10 w-[164px] items-end border-2 border-r-[#a5efdb] border-b-[#a5efdb] border-l-[#57a58d] bg-[#54cdaf] pb-1 pl-[3px] text-[15px] leading-4 whitespace-pre`}>
            Y = 174.527690mm
          </div>
        </div>
      </main>
      <CommandRow />
      <StatusRow />
      <Taskbar />
      <Popview />
      <Reader />
      <LanguageBar />
      <SogouBar />
    </div>
  );
}
